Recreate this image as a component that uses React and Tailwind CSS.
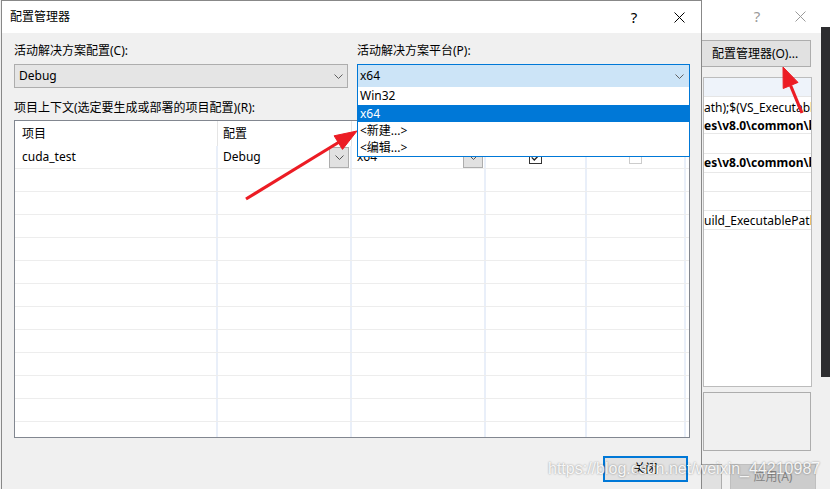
import React from 'react';

const UI = "font-['Noto_Sans','Noto_Sans_CJK_SC',sans-serif]";

function Chevron({ className = '' }) {
  return (
    <svg width="9" height="5" viewBox="0 0 9 5" fill="none" className={className}>
      <path d="M0.5 0.5L4.5 4.5L8.5 0.5" stroke="currentColor" />
    </svg>
  );
}

function CloseIcon({ className = '' }) {
  return (
    <svg width="11" height="11" viewBox="0 0 11 11" className={className}>
      <path d="M0.5 0.5L10.5 10.5M10.5 0.5L0.5 10.5" stroke="currentColor" />
    </svg>
  );
}

function CellButton() {
  return (
    <div className="w-[20px] h-[21px] shrink-0 border border-[#adadad] bg-[#e1e1e1] flex items-center justify-center text-[#555]">
      <Chevron />
    </div>
  );
}

function Check({ checked }) {
  if (!checked) {
    return <div className="w-[13px] h-[13px] border border-[#cccccc] bg-white" />;
  }
  return (
    <div className="w-[13px] h-[13px] border border-[#333] bg-white flex items-center justify-center">
      <svg width="9" height="7" viewBox="0 0 9 7">
        <path d="M0.7 3.4L3.3 6L8.4 0.8" fill="none" stroke="#222" strokeWidth="1.3" />
      </svg>
    </div>
  );
}

function Cell({ w, header, className = '', children }) {
  return (
    <div
      className={`${w} h-full shrink-0 flex items-center ${
        header ? 'border-r border-[#e5e5e5]' : 'border-r-2 border-[#e9eff9]'
      } ${className}`}
    >
      {children}
    </div>
  );
}

function TableRow({ header, item }) {
  return (
    <div className={`flex shrink-0 ${header ? 'h-[25px]' : 'h-[23px] border-b border-[#ededed]'}`}>
      <Cell w="w-[203px]" header={header} className="pl-[7px]">
        {header ? '项目' : item?.name}
      </Cell>
      <Cell w="w-[134px]" header={header} className="pl-[5px] pr-[1px] justify-between">
        {header ? '配置' : item && (<><span>{item.config}</span><CellButton /></>)}
      </Cell>
      <Cell w="w-[134px]" header={header} className="pl-[5px] pr-[1px] justify-between">
        {header ? '平台' : item && (<><span>{item.platform}</span><CellButton /></>)}
      </Cell>
      <Cell w="w-[101px]" header={header} className="justify-center">
        {header ? '生成' : item && <Check checked={item.build} />}
      </Cell>
      <Cell w="w-[99px]" header={header} className="justify-center">
        {header ? '部署' : item && <Check checked={item.deploy} />}
      </Cell>
      <div className="flex-1" />
    </div>
  );
}

const projects = [{ name: 'cuda_test', config: 'Debug', platform: 'x64', build: true, deploy: false }];
const platforms = ['Win32', 'x64', '<新建...>', '<编辑...>'];

function PropertyWindow() {
  return (
    <div className={`absolute left-[600px] top-0 w-[230px] h-[489px] flex flex-col bg-[#f0f0f0] text-[12px] text-black ${UI}`}>
      <div className="h-[33px] shrink-0 bg-white flex items-center">
        <span className="ml-[146px] w-[22px] text-center text-[15px] text-[#9a9a9a]">?</span>
        <CloseIcon className="ml-[27px] text-[#9a9a9a]" />
      </div>
      <div className="flex-1 flex">
        <div className="w-[221px] flex flex-col">
          <div className="ml-[99px] mt-[7px] w-[112px] h-[27px] border border-[#adadad] bg-[#e1e1e1] flex items-center justify-center">
            配置管理器(O)...
          </div>
          <div className="ml-[103px] mt-[10px] w-[109px] h-[310px] border border-[#bcbcbc] bg-white flex flex-col overflow-hidden whitespace-nowrap">
            <div className="h-[19px] shrink-0 bg-[#eef3fa] border-b border-[#e5e5e5]" />
            <div className="h-[37px] shrink-0 border-b border-[#e8e8e8] flex flex-col pt-[2px] leading-[18px]">
              <span>ath);$(VS_ExecutablePath)</span>
              <span className="font-bold">{'es\\v8.0\\common\\bin'}</span>
            </div>
            <div className="h-[20px] shrink-0 border-b border-[#e8e8e8]" />
            <div className="h-[19px] shrink-0 border-b border-[#e8e8e8] flex items-center font-bold">
              {'es\\v8.0\\common\\bin'}
            </div>
            <div className="h-[19px] shrink-0 border-b border-[#e8e8e8]" />
            <div className="h-[19px] shrink-0 border-b border-[#e8e8e8]" />
            <div className="h-[19px] shrink-0 border-b border-[#e8e8e8] flex items-end leading-[16px]">
              uild_ExecutablePath)
            </div>
          </div>
          <div className="ml-[103px] mt-[5px] w-[108px] h-[59px] border border-[#adadad]" />
          <div className="mt-[13px] flex">
            <div className="ml-[60px] w-[62px] h-[26px] border border-[#adadad] bg-[#e1e1e1]" />
            <div className="ml-[8px] w-[86px] h-[26px] border border-[#bfbfbf] bg-[#cccccc] flex items-center justify-center text-[#838383]">
              应用(A)
            </div>
          </div>
        </div>
        <div className="w-[9px] h-[350px] -mt-[6px] bg-[#2d2d30]" />
      </div>
    </div>
  );
}

function ConfigDialog() {
  return (
    <div className={`absolute left-[1px] top-0 w-[701px] h-[489px] flex flex-col border-l border-t border-r border-[#888888] text-[12px] text-black ${UI}`}>
      {/* title bar */}
      <div className="h-[32px] shrink-0 bg-white flex items-center">
        <span className="pl-[8px]">配置管理器</span>
        <span className="ml-auto w-[46px] text-center text-[15px]">?</span>
        <div className="w-[44px] flex justify-center">
          <CloseIcon />
        </div>
      </div>

      <div className="flex-1 bg-[#f0f0f0] pl-[12px] pr-[11px] pt-[10px] flex flex-col">
        <div className="flex gap-[9px]">
          <div className="w-[334px] flex flex-col">
            <span className="leading-[16px] mb-[5px]">活动解决方案配置(C):</span>
            <div className="h-[24px] border border-[#adadad] bg-[#e5e5e5] flex items-center justify-between pl-[4px] pr-[4px]">
              <span>Debug</span>
              <Chevron className="text-[#606060]" />
            </div>
          </div>
          <div className="flex-1 flex flex-col">
            <span className="leading-[16px] mb-[5px]">活动解决方案平台(P):</span>
            <div className="relative h-[24px] border border-[#0078d7] bg-[#cce4f7] flex items-center justify-between pl-[2px] pr-[5px]">
              <span>x64</span>
              <Chevron className="text-[#606060]" />
              <div className="absolute left-[-1px] right-[-1px] top-full z-10 bg-white border border-t-0 border-[#0078d7] flex flex-col">
                {platforms.map((p, i) => (
                  <div
                    key={p}
                    className={`pl-[2px] flex items-center ${i === 0 ? 'h-[18px]' : 'h-[17px]'} ${
                      p === 'x64' ? 'bg-[#0078d7] text-white' : ''
                    }`}
                  >
                    {p}
                  </div>
                ))}
              </div>
            </div>
          </div>
        </div>

        <span className="mt-[12px] leading-[16px]">项目上下文(选定要生成或部署的项目配置)(R):</span>

        <div className="mt-[4px] h-[318px] border border-[#828790] bg-white flex flex-col overflow-hidden">
          <TableRow header />
          {Array.from({ length: 13 }).map((_, i) => (
            <TableRow key={i} item={projects[i]} />
          ))}
        </div>

        <div className="self-end mt-[18px] mr-[2px] w-[85px] h-[26px] border-2 border-[#0078d7] bg-[#e1e1e1] flex items-center justify-center">
          关闭
        </div>
      </div>
    </div>
  );
}

function Arrows() {
  return (
    <svg className="absolute inset-0 pointer-events-none" width="830" height="489" viewBox="0 0 830 489">
      <g fill="#ec1c24" stroke="#ec1c24">
        <line x1="246" y1="199" x2="340" y2="141.5" strokeWidth="3.2" />
        <polygon points="357,131 342.5,149.4 334.1,135.8" strokeWidth="1" />
        <line x1="802" y1="113" x2="790.6" y2="85.5" strokeWidth="3.2" />
        <polygon points="783,67 798,82.4 783.2,88.5" strokeWidth="1" />
      </g>
    </svg>
  );
}

export default function App() {
  return (
    <div className="relative w-[830px] h-[489px] overflow-hidden bg-[#f0f0f0]">
      <PropertyWindow />
      <ConfigDialog />
      <Arrows />
      <div className="absolute left-[548px] top-[459px] text-[16px] leading-[20px] whitespace-nowrap text-white/90 font-['Liberation_Sans',Arial,sans-serif] [text-shadow:0_0_2px_rgba(0,0,0,0.45)]">
        https://blog.csdn.net/weixin_44210987
      </div>
    </div>
  );
}
